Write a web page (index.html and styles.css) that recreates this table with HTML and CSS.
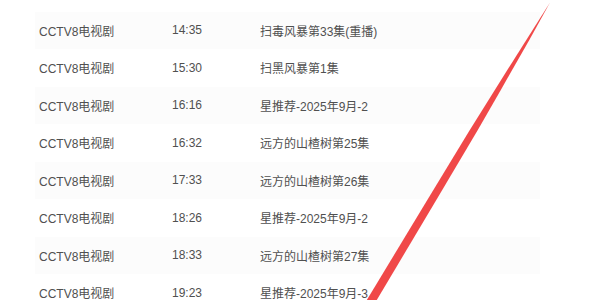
FILE: index.html
```html
<!DOCTYPE html>
<html lang="zh">
<head>
<meta charset="utf-8">
<link rel="stylesheet" href="styles.css">
</head>
<body>
<div class="page">
  <table class="schedule">
    <colgroup><col class="c-ch"><col class="c-time"><col class="c-prog"></colgroup>
    <tbody>
      <tr><td>CCTV8电视剧</td><td>14:35</td><td>扫毒风暴第33集(重播)</td></tr>
      <tr><td>CCTV8电视剧</td><td>15:30</td><td>扫黑风暴第1集</td></tr>
      <tr><td>CCTV8电视剧</td><td>16:16</td><td>星推荐-2025年9月-2</td></tr>
      <tr><td>CCTV8电视剧</td><td>16:32</td><td>远方的山楂树第25集</td></tr>
      <tr><td>CCTV8电视剧</td><td>17:33</td><td>远方的山楂树第26集</td></tr>
      <tr><td>CCTV8电视剧</td><td>18:26</td><td>星推荐-2025年9月-2</td></tr>
      <tr><td>CCTV8电视剧</td><td>18:33</td><td>远方的山楂树第27集</td></tr>
      <tr><td>CCTV8电视剧</td><td>19:23</td><td>星推荐-2025年9月-3</td></tr>
    </tbody>
  </table>
  <svg class="mark" width="600" height="300" viewBox="0 0 600 300" aria-hidden="true">
    <polygon fill="#f04848" points="550,2.5 529.3,40 500.8,90 477.8,130 436.3,200 373.8,305 363.8,305 427.3,200 469.8,130 494.8,90 526.3,40"/>
  </svg>
</div>
</body>
</html>
```
FILE: styles.css
```css
html, body {
  margin: 0;
  padding: 0;
  background: #ffffff;
}
.page {
  position: relative;
  width: 600px;
  height: 300px;
  overflow: hidden;
  padding: 11.5px 0 0 35px;
  box-sizing: border-box;
}
.schedule {
  border-collapse: collapse;
  width: 505px;
  font-family: Arial, "Liberation Sans", "Noto Sans CJK SC", sans-serif;
  font-size: 12px;
  color: #505050;
}
.c-ch { width: 133px; }
.c-time { width: 88px; }
.schedule td {
  height: 37.5px;
  padding: 0 0 0 4px;
  box-sizing: border-box;
  white-space: nowrap;
  vertical-align: middle;
}
.schedule tr:nth-child(odd) td {
  background: #fcfcfc;
}
.mark {
  position: absolute;
  left: 0;
  top: 0;
}
```
